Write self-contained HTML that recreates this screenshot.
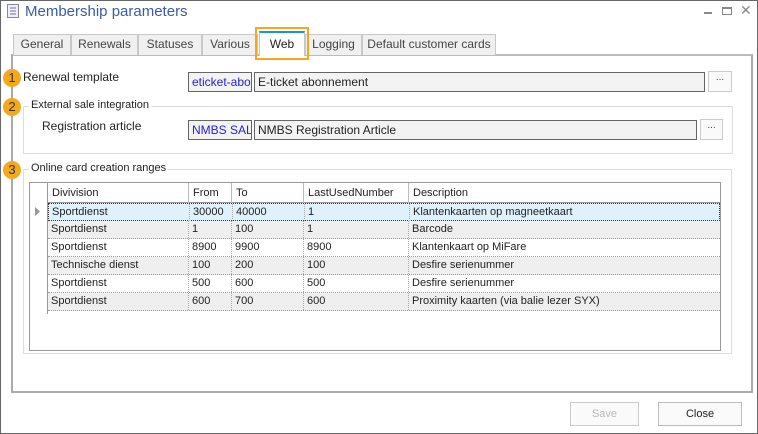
<!DOCTYPE html>
<html><head><meta charset="utf-8"><style>
*{box-sizing:border-box;margin:0;padding:0}
body{width:758px;height:434px;background:#fff;font-family:"Liberation Sans",sans-serif;font-size:11px;color:#222;position:relative;overflow:hidden}
.a{position:absolute}
.win{left:0;top:0;width:758px;height:434px;border:1px solid #666}
.tab{position:absolute;top:34px;height:21px;background:#f0f0f0;border:1px solid #c8c8c8;border-bottom:none;color:#444;text-align:center;line-height:19px;font-size:12px}
.fld{position:absolute;height:20px;border:1px solid #666;background:#f3f3f3;font-size:12px;line-height:18px;padding-left:3px;white-space:nowrap;overflow:hidden}
.btn{position:absolute;border:1px solid #ccc;background:#fafafa;text-align:center}
.badge{position:absolute;width:18px;height:18px;border-radius:9px;background:#f5a81c;color:#333;font-size:13px;text-align:center;line-height:18px}
.lbl{position:absolute;font-size:12px;color:#222}
.gb{position:absolute;border:1px solid #ddd}
.row{position:absolute;left:48px;width:672px;height:18px;border-bottom:1px dotted #999;font-size:11px;line-height:17px}
.row span,.hdr span{position:absolute;top:0}
.hdr span{border-left:1px solid #bbb;padding-left:4px}
.row span{border-left:1px dotted #aaa;padding-left:3px;height:17px}
</style></head><body>
<div class="a win"></div>
<svg class="a" style="left:7px;top:4px" width="12" height="14"><rect x="0.5" y="0.5" width="11" height="13" fill="#eef" stroke="#889"/><path d="M3 4h6M3 7h6M3 10h6" stroke="#778"/></svg>
<div class="a" style="left:25px;top:3px;font-size:15px;color:#3b5ba8">Membership parameters</div>
<div class="a" style="left:704px;top:12px;width:8px;height:2px;background:#888"></div>
<div class="a" style="left:722px;top:7px;width:10px;height:8px;border:1px solid #888;border-top:2px solid #888"></div>
<div class="a" style="left:740px;top:2px;color:#888;font-size:14px">✕</div>

<div class="a" style="left:11px;top:54px;width:742px;height:339px;border:2px solid #aaa;border-top:2px solid #bbb"></div>
<div class="tab" style="left:13px;width:58px">General</div>
<div class="tab" style="left:71px;width:67px">Renewals</div>
<div class="tab" style="left:138px;width:64px">Statuses</div>
<div class="tab" style="left:202px;width:56px">Various</div>
<div class="tab" style="left:259px;width:46px;top:31px;height:25px;background:#fff;border-top:2px solid #1e90e0;line-height:22px;color:#222">Web</div>
<div class="tab" style="left:305px;width:57px">Logging</div>
<div class="tab" style="left:362px;width:134px">Default customer cards</div>
<div class="a" style="left:255px;top:27px;width:54px;height:33px;border:2px solid #f5a81c"></div>

<div class="badge" style="left:3px;top:69px">1</div>
<div class="lbl" style="left:23px;top:70px">Renewal template</div>
<div class="fld" style="left:188px;top:72px;width:64px;color:#2222dd">eticket-abo</div>
<div class="fld" style="left:254px;top:72px;width:451px">E-ticket abonnement</div>
<div class="btn" style="left:708px;top:71px;width:24px;height:21px;color:#33a;font-size:10px">...</div>

<div class="gb" style="left:23px;top:106px;width:710px;height:48px"></div>
<div class="badge" style="left:3px;top:98px">2</div>
<div class="lbl" style="left:29px;top:99px;background:#fff;padding:0 2px;font-size:11px">External sale integration</div>
<div class="lbl" style="left:42px;top:119px">Registration article</div>
<div class="fld" style="left:188px;top:120px;width:64px;color:#2222dd">NMBS SAL</div>
<div class="fld" style="left:254px;top:120px;width:443px">NMBS Registration Article</div>
<div class="btn" style="left:700px;top:119px;width:23px;height:21px;color:#33a;font-size:10px">...</div>

<div class="gb" style="left:23px;top:169px;width:709px;height:185px"></div>
<div class="badge" style="left:3px;top:161px">3</div>
<div class="lbl" style="left:29px;top:162px;background:#fff;padding:0 2px;font-size:11px">Online card creation ranges</div>

<div class="a" style="left:29px;top:182px;width:692px;height:169px;border:1px solid #999;background:#fff"></div>
<div class="a" style="left:30px;top:183px;width:18px;height:131px;border-right:1px solid #999"></div>
<div class="a hdr" style="left:48px;top:183px;width:672px;height:20px;border-bottom:1px solid #999;line-height:20px">
<span style="left:0;border:none">Divivision</span><span style="left:140px">From</span><span style="left:183px">To</span><span style="left:255px">LastUsedNumber</span><span style="left:360px">Description</span></div>
<svg class="a" style="left:35px;top:207px" width="6" height="9"><path d="M0 0L5 4.5L0 9Z" fill="#999"/></svg>
<div class="row" style="top:203px;background:#dff1fb;border:1px dotted #333"><span style="left:0;border:none">Sportdienst</span><span style="left:140px">30000</span><span style="left:183px">40000</span><span style="left:255px">1</span><span style="left:360px">Klantenkaarten op magneetkaart</span></div>
<div class="row" style="top:221px;background:#efefef"><span style="left:0;border:none">Sportdienst</span><span style="left:140px">1</span><span style="left:183px">100</span><span style="left:255px">1</span><span style="left:360px">Barcode</span></div>
<div class="row" style="top:239px"><span style="left:0;border:none">Sportdienst</span><span style="left:140px">8900</span><span style="left:183px">9900</span><span style="left:255px">8900</span><span style="left:360px">Klantenkaart op MiFare</span></div>
<div class="row" style="top:257px;background:#efefef"><span style="left:0;border:none">Technische dienst</span><span style="left:140px">100</span><span style="left:183px">200</span><span style="left:255px">100</span><span style="left:360px">Desfire serienummer</span></div>
<div class="row" style="top:275px"><span style="left:0;border:none">Sportdienst</span><span style="left:140px">500</span><span style="left:183px">600</span><span style="left:255px">500</span><span style="left:360px">Desfire serienummer</span></div>
<div class="row" style="top:293px;background:#efefef"><span style="left:0;border:none">Sportdienst</span><span style="left:140px">600</span><span style="left:183px">700</span><span style="left:255px">600</span><span style="left:360px">Proximity kaarten (via balie lezer SYX)</span></div>

<div class="btn" style="left:570px;top:402px;width:69px;height:24px;line-height:22px;color:#bbb;font-size:11px">Save</div>
<div class="btn" style="left:658px;top:402px;width:84px;height:24px;line-height:22px;color:#222;font-size:11px;border-color:#bbb">Close</div>
</body></html>
